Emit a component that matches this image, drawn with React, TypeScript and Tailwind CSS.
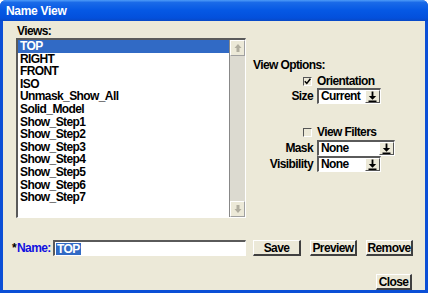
import type { ReactNode } from "react";

const font = "font-['Liberation_Sans',Arial,sans-serif] font-bold text-[12px] tracking-[-0.6px]";

const views = [
  "TOP",
  "RIGHT",
  "FRONT",
  "ISO",
  "Unmask_Show_All",
  "Solid_Model",
  "Show_Step1",
  "Show_Step2",
  "Show_Step3",
  "Show_Step4",
  "Show_Step5",
  "Show_Step6",
  "Show_Step7",
];

const DropArrow = () => (
  <svg width="9" height="11" viewBox="0 0 9 11">
    <path d="M4.5 0.5v5.5" stroke="#000" strokeWidth="1.8" />
    <path d="M0.8 5h7.4l-3.7 3.7z" fill="#000" />
    <path d="M0.5 10.2h8" stroke="#000" strokeWidth="1.5" />
  </svg>
);

const ScrollArrow = ({ up }: { up?: boolean }) => (
  <svg width="8" height="10" viewBox="0 0 8 10" className={up ? "" : "rotate-180"}>
    <path d="M4 1l3.5 4h-2v4h-3v-4h-2z" fill="#b0ad9f" />
  </svg>
);

const Drop = ({ value, width }: { value: string; width: string }) => (
  <div
    className={`${width} h-[16px] flex bg-white border-t-[2px] border-l-[2px] border-t-[#5a5a5a] border-l-[#5a5a5a] border-b border-r border-b-[#fff] border-r-[#fff]`}
  >
    <div className="flex-1 pl-[2px] leading-[13px] text-black">{value}</div>
    <div className="w-[15px] h-[13px] bg-[#ece9d8] border-t border-l border-t-white border-l-white border-b border-r border-b-[#555] border-r-[#555] flex items-center justify-center">
      <DropArrow />
    </div>
  </div>
);

const Check = ({ checked }: { checked?: boolean }) => (
  <div className="w-[9px] h-[9px] border-t border-l border-t-[#555] border-l-[#555] border-b border-r border-b-white border-r-white bg-[#ece9d8] flex items-center justify-center">
    {checked && (
      <svg width="7" height="7" viewBox="0 0 7 7">
        <path d="M0.8 3.2l2 2.2 3.6-4.6" stroke="#000" strokeWidth="1.5" fill="none" />
      </svg>
    )}
  </div>
);

const Btn = ({ children, width }: { children: ReactNode; width: string }) => (
  <div
    className={`${width} h-[16px] bg-[#ece9d8] border-t border-l border-t-white border-l-white border-b-2 border-r-2 border-b-[#404040] border-r-[#404040] flex items-center justify-center leading-none text-black`}
  >
    {children}
  </div>
);

export default function App() {
  return (
    <div className={`${font} w-[428px] h-[293px] flex flex-col bg-[#0b4fd6] rounded-t-[6px] overflow-hidden`}>
      <div className="h-[21px] flex items-center px-[6px] text-white text-[12px] tracking-[-0.3px] bg-[linear-gradient(180deg,#4e9bf8_0%,#1a6ae8_12%,#0558e4_50%,#0350dc_85%,#0848c6_100%)]">
        Name View
      </div>
      <div className="flex-1 mx-[3px] mb-[3px] bg-[#ece9d8] flex flex-col">
        <div className="flex pl-[13px]">
          <div className="w-[230px] flex flex-col">
            <div className="h-[17px] pt-[3px] leading-[14px] pl-[1px] text-black">Views:</div>
            <div className="h-[180px] flex bg-white border-t-2 border-l-2 border-t-[#5a5a5a] border-l-[#5a5a5a] border-b border-r border-b-white border-r-white">
              <div className="flex-1 flex flex-col text-black">
                {views.map((v, i) => (
                  <div
                    key={v}
                    className={`h-[12.6px] leading-[12.6px] pl-[2px] ${i === 0 ? "bg-[#316ac5] text-white" : ""}`}
                  >
                    {v}
                  </div>
                ))}
              </div>
              <div className="w-[16px] flex flex-col justify-between bg-[#dcdad0] border-l border-l-[#888]">
                <div className="h-[16px] bg-[#ece9d8] border-t border-l border-t-white border-l-white border-b border-r border-b-[#a0a0a0] border-r-[#a0a0a0] flex items-center justify-center">
                  <ScrollArrow up />
                </div>
                <div className="h-[16px] bg-[#ece9d8] border-t border-l border-t-white border-l-white border-b border-r border-b-[#a0a0a0] border-r-[#a0a0a0] flex items-center justify-center">
                  <ScrollArrow />
                </div>
              </div>
            </div>
          </div>
          <div className="pl-[7px] pt-[37px] flex flex-col text-black">
            <div className="h-[14px] leading-[14px]">View Options:</div>
            <div className="grid grid-cols-[60px_auto] gap-x-[4px] mt-[2px] items-center">
              <div className="flex justify-end pr-[1px]">
                <Check checked />
              </div>
              <div className="h-[14px] leading-[14px]">Orientation</div>
              <div className="text-right leading-[16px]">Size</div>
              <div>
                <Drop value="Current" width="w-[64px]" />
              </div>
              <div className="flex justify-end pr-[1px] mt-[21px]">
                <Check />
              </div>
              <div className="h-[14px] leading-[14px] mt-[21px]">View Filters</div>
              <div className="text-right leading-[16px] mt-[1px]">Mask</div>
              <div className="mt-[1px]">
                <Drop value="None" width="w-[78px]" />
              </div>
              <div className="text-right leading-[16px]">Visibility</div>
              <div>
                <Drop value="None" width="w-[64px]" />
              </div>
            </div>
          </div>
        </div>
        <div className="flex items-center pl-[9px] mt-[21px] text-black">
          <span className="w-[5px]">*</span>
          <span className="text-[#1010e0] w-[36px]">Name:</span>
          <div className="w-[193px] h-[16px] bg-white border-t-2 border-l-2 border-t-[#5a5a5a] border-l-[#5a5a5a] border-b border-r border-b-white border-r-white flex items-center pl-[1px]">
            <span className="bg-[#316ac5] text-white leading-[12px] px-[1px]">TOP</span>
          </div>
          <div className="ml-[7px]">
            <Btn width="w-[48px]">Save</Btn>
          </div>
          <div className="ml-[9px]">
            <Btn width="w-[47px]">Preview</Btn>
          </div>
          <div className="ml-[9px]">
            <Btn width="w-[47px]">Remove</Btn>
          </div>
        </div>
        <div className="flex justify-end pr-[13px] mt-[17px]">
          <Btn width="w-[36px]">Close</Btn>
        </div>
      </div>
    </div>
  );
}
